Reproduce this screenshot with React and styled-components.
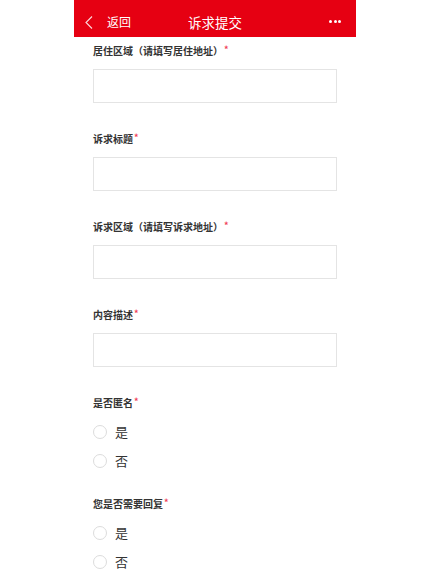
import styled, { createGlobalStyle } from "styled-components";

const GlobalStyle = createGlobalStyle`
  body {
    margin: 0;
    background: #fff;
    font-family: "Noto Sans CJK SC", "Noto Sans", sans-serif;
    color: #333;
  }
`;

const Page = styled.div`
  width: 282px;
  margin: 0 auto;
  background: #fff;
`;

const Header = styled.header`
  height: 37px;
  box-sizing: border-box;
  padding-top: 7px;
  background: #e60012;
  display: grid;
  grid-template-columns: 1fr auto 1fr;
  align-items: center;
  color: #fff;
`;

const Back = styled.div`
  display: flex;
  align-items: center;
  padding-left: 11px;
  font-size: 12px;
  line-height: 16px;

  svg {
    margin-right: 14px;
  }
`;

const Title = styled.h1`
  margin: 0;
  font-size: 13.5px;
  font-weight: normal;
  line-height: 18px;
`;

const More = styled.div`
  justify-self: end;
  display: flex;
  gap: 1.5px;
  padding-right: 15px;
  margin-top: -2px;

  span {
    width: 3px;
    height: 3px;
    border-radius: 50%;
    background: #fff;
  }
`;

const Form = styled.form`
  padding: 0 19px;
`;

const Field = styled.div`
  padding: 7px 0 ${(p) => (p.$radio ? "15px" : "22px")};
`;

const Label = styled.div`
  height: 14px;
  font-size: 10px;
  line-height: 14px;
  font-weight: bold;
  color: #333;
  margin-bottom: ${(p) => (p.$radio ? "7px" : "11px")};
`;

const Star = styled.span`
  color: #f0415a;
  font-size: 9px;
  line-height: 0;
  position: relative;
  top: -2px;
  margin-left: 1px;
`;

const Input = styled.input`
  display: block;
  width: 100%;
  height: 34px;
  box-sizing: border-box;
  border: 1px solid #e4e4e4;
  border-radius: 0;
  background: #fff;
  outline: none;
  padding: 0 8px;
  font: inherit;
`;

const Option = styled.label`
  display: flex;
  align-items: center;
  height: 29px;
  font-size: 13px;
  color: #333;
`;

const Circle = styled.span`
  width: 14px;
  height: 14px;
  box-sizing: border-box;
  border: 1px solid #dcdcdc;
  border-radius: 50%;
  margin-right: 8px;
`;

const textFields = [
  "居住区域（请填写居住地址）",
  "诉求标题",
  "诉求区域（请填写诉求地址）",
  "内容描述",
];

const radioFields = ["是否匿名", "您是否需要回复"];

export default function App() {
  return (
    <>
      <GlobalStyle />
      <Page>
        <Header>
          <Back>
            <svg width="8" height="13" viewBox="0 0 8 13">
              <path
                d="M7 0.5 L1 6.5 L7 12.5"
                fill="none"
                stroke="rgba(255,255,255,0.85)"
                strokeWidth="1.1"
              />
            </svg>
            返回
          </Back>
          <Title>诉求提交</Title>
          <More>
            <span />
            <span />
            <span />
          </More>
        </Header>
        <Form>
          {textFields.map((name) => (
            <Field key={name}>
              <Label>
                {name}
                <Star>*</Star>
              </Label>
              <Input type="text" />
            </Field>
          ))}
          {radioFields.map((name) => (
            <Field key={name} $radio>
              <Label $radio>
                {name}
                <Star>*</Star>
              </Label>
              <Option>
                <Circle />是
              </Option>
              <Option>
                <Circle />否
              </Option>
            </Field>
          ))}
        </Form>
      </Page>
    </>
  );
}
